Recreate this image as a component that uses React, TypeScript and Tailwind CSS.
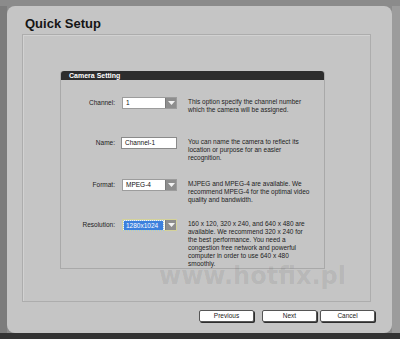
import React from "react";

const font = "font-['Liberation_Sans',Arial,sans-serif]";

const Arrow = () => (
  <div className="w-[11px] h-full bg-[#8e8e8e] border-l border-[#7a7a7a] flex items-center justify-center">
    <svg width="7" height="4" viewBox="0 0 7 4">
      <path d="M0 0 H7 L3.5 4 Z" fill="#f2f2f2" />
    </svg>
  </div>
);

const Select = ({ value, focused }: { value: string; focused?: boolean }) => (
  <div
    className={
      focused
        ? "w-[55px] h-[12px] border border-[#d4d29a] bg-[#fafae8] flex items-stretch"
        : "w-[55px] h-[12px] border border-[#9c9c9c] bg-white flex items-stretch"
    }
  >
    <div className="flex-1 flex items-center pl-[1px]">
      {focused ? (
        <span className="bg-[#3c80dd] text-white px-[2px] leading-[9px] w-[39px] outline outline-1 outline-dotted outline-[#9cc0f0]">
          {value}
        </span>
      ) : (
        <span className="pl-[2px] text-[#111]">{value}</span>
      )}
    </div>
    <Arrow />
  </div>
);

const Row = ({
  label,
  control,
  lines,
  h,
}: {
  label: string;
  control: React.ReactNode;
  lines: string[];
  h: string;
}) => (
  <div className={`flex ${h}`}>
    <div className="w-[54px] text-right leading-[12px] text-[#222]">{label}</div>
    <div className="ml-[7px] w-[66px]">{control}</div>
    <div className="leading-[8px] pt-[1px] text-[#1c1c1c] whitespace-nowrap">
      {lines.map((l, i) => (
        <div key={i}>{l}</div>
      ))}
    </div>
  </div>
);

const Button = ({ label, className }: { label: string; className?: string }) => (
  <div
    className={`w-[55px] h-[12px] bg-white border border-[#555] rounded-[2px] shadow-[1px_1px_0_#2e2e2e] flex items-center justify-center text-[6.5px] text-[#222] ${className ?? ""}`}
  >
    {label}
  </div>
);

export default function App() {
  return (
    <div className={`relative w-[400px] h-[339px] bg-[#8b8b8b] overflow-hidden flex flex-col ${font}`}>
      <div className="flex h-[333px] pt-[6px]">
        <div className="w-[7px] bg-[#7c7c7c]" />
        <div className="w-[385px] h-[327px] rounded-[8px] bg-[#c5c5c5] flex flex-col">
          <h1 className="ml-[18px] mt-[8px] h-[20px] text-[13px] font-bold leading-[20px] text-[#151515]">
            Quick Setup
          </h1>
          <div className="ml-[15px] w-[349px] h-[268px] border border-[#adadad] shadow-[inset_1px_1px_0_#d2d2d2]">
            <div className="ml-[37px] mt-[36px] w-[265px] h-[198px] border border-[#a9a9a9] border-t-0 rounded-t-[3px] text-[6.5px]">
              <div className="h-[9px] bg-[#2d2d2d] rounded-t-[3px] pl-[8px] text-white font-bold text-[7px] leading-[9px]">
                Camera Setting
              </div>
              <div className="pt-[17px]">
                <Row
                  h="h-[40px]"
                  label="Channel:"
                  control={<Select value="1" />}
                  lines={["This option specify the channel number", "which the camera will be assigned."]}
                />
                <Row
                  h="h-[42px]"
                  label="Name:"
                  control={
                    <div className="w-[56px] h-[12px] -ml-[1px] border border-[#8a8a8a] bg-white pl-[3px] leading-[10px] text-[#111]">
                      Channel-1
                    </div>
                  }
                  lines={["You can name the camera to reflect its", "location or purpose for an easier", "recognition."]}
                />
                <Row
                  h="h-[40px]"
                  label="Format:"
                  control={<Select value="MPEG-4" />}
                  lines={["MJPEG and MPEG-4 are available. We", "recommend MPEG-4 for the optimal video", "quality and bandwidth."]}
                />
                <Row
                  h="h-[50px]"
                  label="Resolution:"
                  control={<Select value="1280x1024" focused />}
                  lines={[
                    "160 x 120, 320 x 240, and 640 x 480 are",
                    "available. We recommend 320 x 240 for",
                    "the best performance. You need a",
                    "congestion free network and powerful",
                    "computer in order to use 640 x 480",
                    "smoothly.",
                  ]}
                />
              </div>
            </div>
          </div>
          <div className="flex mt-[8px] ml-[192px]">
            <Button label="Previous" />
            <Button label="Next" className="ml-[8px]" />
            <Button label="Cancel" className="ml-[3px]" />
          </div>
        </div>
        <div className="w-[8px] bg-[#9c9c9c]" />
      </div>
      <div className="flex-1 bg-[#333]" />
      <div className="absolute left-[159px] top-[268px] h-[17px] font-['DejaVu_Sans',sans-serif] font-bold text-[24px] leading-[17px] text-[rgba(0,0,0,0.08)] pointer-events-none">
        www.hotfix.pl
      </div>
    </div>
  );
}
